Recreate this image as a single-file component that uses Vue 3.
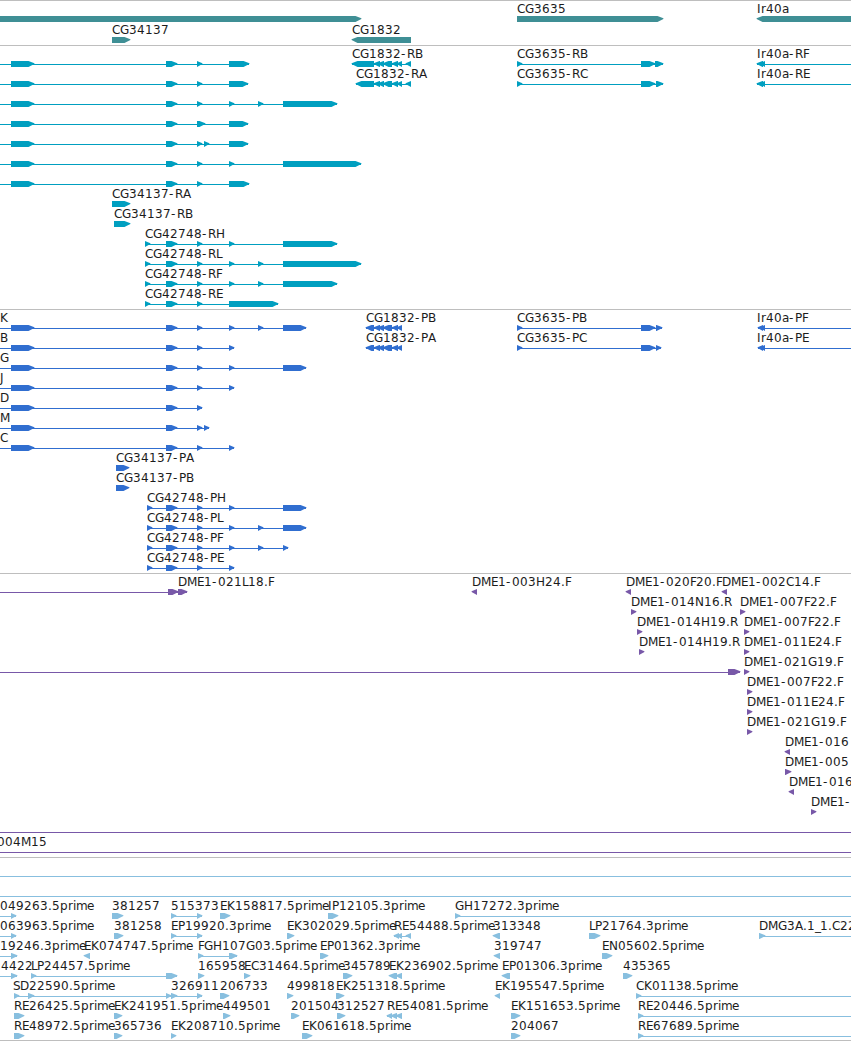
<template>
  <div class="browser">
    <section v-for="track in tracks" :key="track.name" class="track" :class="`track-${track.name}`">
      <svg class="track-canvas" :width="WIDTH" :height="track.height">
        <g v-for="(row, i) in track.rows" :key="i" :transform="`translate(0 ${15 + i * track.pitch})`">
          <g v-for="(item, j) in row" :key="j">
            <rect
              v-if="item.to > item.from"
              class="glyph"
              :x="item.from"
              y="3"
              :width="item.to - item.from"
              height="1"
            />
            <polygon
              v-for="(block, k) in item.blocks"
              :key="k"
              class="glyph"
              :points="arrow(block, item.reverse)"
            />
            <text v-if="item.label" class="label" :x="letterPositions(item)" y="-3">{{ item.label }}</text>
          </g>
        </g>
      </svg>
    </section>
  </div>
</template>

<script setup>
const WIDTH = 851;

// label, label x, exon blocks, line range
const fwd = (label, x, blocks = [], from = 0, to = 0) => ({ label, x, blocks, from, to });
const rev = (label, x, blocks = [], from = 0, to = 0) => ({
  ...fwd(label, x, blocks, from, to),
  reverse: true,
});
const line = (label = "", x = 0) => fwd(label, x, [], 0, WIDTH);

// exons shared by the CG42748 isoforms
const A = [11, 34];
const B = [166, 177];
const C = [197, 202];
const D = [229, 234];
const E = [258, 263];

const isoform = (label, ...blocks) => fwd(label, 0, [A, B, ...blocks], 0, blocks.at(-1)[1]);
const shortForm = (label, x, ...blocks) => fwd(label, x, [[x, x + 5], B, ...blocks], x, blocks.at(-1)[1]);

const minusExons = [[374, 380], [378, 384], [383, 392], [392, 398], [397, 402]];

const tracks = [
  {
    name: "gene",
    height: 44,
    pitch: 21,
    rows: [
      [
        fwd("", 0, [[-10, 361]]),
        fwd("CG3635", 517, [[517, 663]]),
        rev("Ir40a", 757, [[757, 870]]),
      ],
      [fwd("CG34137", 112, [[112, 130]]), rev("CG1832", 352, [[352, 411]])],
    ],
  },
  {
    name: "transcript",
    height: 263,
    pitch: 20,
    rows: [
      [
        isoform("", C, [229, 249]),
        rev("CG1832-RB", 352, [[352, 374], ...minusExons, [406, 411]], 352, 411),
        fwd("CG3635-RB", 517, [[517, 522], [641, 655], [655, 663]], 517, 663),
        rev("Ir40a-RF", 757, [[757, 763], [760, 765]], 757, WIDTH),
      ],
      [
        isoform("", C, [229, 248]),
        rev("CG1832-RA", 356, [[356, 374], ...minusExons, [406, 411]], 356, 411),
        fwd("CG3635-RC", 517, [[517, 522], [641, 655], [656, 663]], 517, 663),
        rev("Ir40a-RE", 757, [[757, 763], [760, 765]], 757, WIDTH),
      ],
      [isoform("", C, D, E, [283, 337])],
      [isoform("", [197, 205], [229, 248])],
      [isoform("", C, [204, 209], [229, 248])],
      [isoform("", C, D, [283, 361])],
      [isoform("", C, [229, 249])],
      [fwd("CG34137-RA", 112, [[112, 130]])],
      [fwd("CG34137-RB", 114, [[114, 130]])],
      [shortForm("CG42748-RH", 145, C, D, [283, 337])],
      [shortForm("CG42748-RL", 145, C, D, E, [283, 361])],
      [shortForm("CG42748-RF", 145, C, D, E, [283, 337])],
      [shortForm("CG42748-RE", 145, C, [229, 278])],
    ],
  },
  {
    name: "protein",
    height: 263,
    pitch: 20,
    rows: [
      [
        isoform("K", C, D, E, [283, 306]),
        rev("CG1832-PB", 366, [[366, 374], ...minusExons], 366, 402),
        fwd("CG3635-PB", 517, [[517, 522], [641, 655], [656, 662]], 517, 662),
        rev("Ir40a-PF", 757, [[758, 763], [760, 765]], 758, WIDTH),
      ],
      [
        isoform("B", C, D),
        rev("CG1832-PA", 366, [[366, 374], ...minusExons], 366, 402),
        fwd("CG3635-PC", 517, [[517, 522], [641, 655], [656, 661]], 517, 661),
        rev("Ir40a-PE", 757, [[758, 763], [760, 765]], 758, WIDTH),
      ],
      [isoform("G", C, D, [283, 306])],
      [isoform("J", C, D)],
      [isoform("D", C)],
      [isoform("M", C, [204, 209])],
      [isoform("C", C, D)],
      [fwd("CG34137-PA", 116, [[116, 129]])],
      [fwd("CG34137-PB", 116, [[116, 129]])],
      [shortForm("CG42748-PH", 147, C, D, [283, 306])],
      [shortForm("CG42748-PL", 147, C, D, E, [283, 306])],
      [shortForm("CG42748-PF", 147, C, D, E, [283, 288])],
      [shortForm("CG42748-PE", 147, C, D)],
    ],
  },
  {
    name: "bac",
    height: 283,
    pitch: 20,
    rows: [
      [
        fwd("DME1-021L18.F", 178, [[168, 178], [178, 187]], 0, 187),
        rev("DME1-003H24.F", 472, [[472, 477]]),
        rev("DME1-020F20.F", 626, [[626, 631]]),
        rev("DME1-002C14.F", 722, [[722, 727]]),
      ],
      [fwd("DME1-014N16.R", 631, [[631, 636]]), fwd("DME1-007F22.F", 740, [[740, 745]])],
      [fwd("DME1-014H19.R", 637, [[637, 642]]), fwd("DME1-007F22.F", 744, [[744, 749]])],
      [fwd("DME1-014H19.R", 639, [[639, 644]]), fwd("DME1-011E24.F", 744, [[744, 749]])],
      [fwd("", 0, [[728, 740]], 0, 740), fwd("DME1-021G19.F", 744, [[744, 749]])],
      [fwd("DME1-007F22.F", 747, [[747, 752]])],
      [fwd("DME1-011E24.F", 747, [[747, 752]])],
      [fwd("DME1-021G19.F", 747, [[747, 752]])],
      [rev("DME1-016", 785, [[785, 790]])],
      [fwd("DME1-005", 785, [[785, 791]])],
      [rev("DME1-016", 789, [[789, 794]])],
      [fwd("DME1-", 811, [[811, 816]])],
      [line()],
      [line("004M15", -3)],
    ],
  },
  {
    name: "est",
    height: 182,
    pitch: 20,
    rows: [
      [line()],
      [line()],
      [
        fwd("049263.5prime", 0, [[11, 16]], 0, 16),
        fwd("381257", 112, [[112, 123]]),
        fwd("515373", 171, [[171, 176], C], 171, 202),
        fwd("EK158817.5prime", 220, [[220, 230]]),
        fwd("IP12105.3prime", 328, [[328, 338]]),
        fwd("GH17272.3prime", 455, [[455, 460]], 455, WIDTH),
      ],
      [
        fwd("063963.5prime", 0, [[11, 16]], 0, 16),
        fwd("381258", 114, [[114, 123]]),
        fwd("EP19920.3prime", 171, [[171, 176], C], 171, 202),
        fwd("EK302029.5prime", 287, [[287, 294]]),
        rev("RE54488.5prime", 394, [[394, 399], [397, 402], [406, 411]], 394, 411),
        rev("313348", 493, [[493, 500]]),
        fwd("LP21764.3prime", 589, [[589, 600]]),
        fwd("DMG3A.1_1.C22", 759, [[759, 765]], 759, WIDTH),
      ],
      [
        fwd("19246.3prime", 0, [[11, 17]], 0, 17),
        rev("EK074747.5prime", 84, [[84, 90]]),
        fwd("FGH107G03.5prime", 198, [[198, 203], [229, 237]], 198, 237),
        fwd("EP01362.3prime", 320, [[320, 328]]),
        rev("319747", 494, [[494, 500]]),
        fwd("EN05602.5prime", 602, [[602, 612]]),
      ],
      [
        fwd("4422", 1, [[11, 17]], 0, 17),
        fwd("LP24457.5prime", 31, [[31, 36], B], 31, 177),
        fwd("165958", 198, [[198, 204]]),
        fwd("EC31464.5prime", 244, [[244, 250]]),
        fwd("345789", 343, [[343, 352]]),
        rev("EK236902.5prime", 389, [[389, 397], [396, 402]]),
        rev("EP01306.3prime", 502, [[502, 510]]),
        fwd("435365", 623, [[623, 632]]),
      ],
      [
        fwd("SD22590.5prime", 13, [[14, 19], [28, 34], [166, 171]], 14, 171),
        fwd("326911", 171, [[171, 177], C], 171, 202),
        fwd("206733", 220, [[220, 229]]),
        fwd("499818", 287, [[287, 293]]),
        fwd("EK251318.5prime", 336, [[336, 344]]),
        rev("EK195547.5prime", 495, [[495, 500]]),
        fwd("CK01138.5prime", 636, [[636, 641]], 636, WIDTH),
      ],
      [
        fwd("RE26425.5prime", 14, [[14, 24]]),
        fwd("EK241951.5prime", 114, [[114, 122]]),
        fwd("449501", 223, [[223, 230]]),
        fwd("201504", 291, [[291, 299]]),
        fwd("312527", 337, [[337, 345]]),
        rev("RE54081.5prime", 387, [[387, 392], [391, 397], [396, 402]], 387, 402),
        fwd("EK151653.5prime", 511, [[511, 520]]),
        fwd("RE20446.5prime", 638, [[638, 643]], 638, WIDTH),
      ],
      [
        fwd("RE48972.5prime", 14, [[14, 24]]),
        fwd("365736", 114, [[114, 122]]),
        fwd("EK208710.5prime", 171, [[171, 176]]),
        fwd("EK061618.5prime", 302, [[302, 312]]),
        fwd("204067", 511, [[511, 520]]),
        fwd("RE67689.5prime", 638, [[638, 643]], 638, WIDTH),
      ],
    ],
  },
];

// whole-pixel letter advances, digits are 8
const advances = {
  A: 8, C: 8, D: 9, E: 7, F: 6, G: 9, H: 9, I: 4, K: 8, L: 6, M: 10, N: 9, P: 7, R: 8, S: 7,
  a: 7, e: 7, i: 3, m: 11, p: 8, r: 5, "-": 6, ".": 4, _: 5,
};

const letterPositions = ({ label, x }) => {
  let pos = x;
  return [...label]
    .map((char) => {
      const current = pos;
      pos += advances[char] || 8;
      return current;
    })
    .join(" ");
};

// the tip sits slightly past the feature end
const arrow = ([start, end], reverse) => {
  const head = Math.min(5.5, end - start);
  if (reverse) {
    const neck = start + head;
    return `${end},0 ${neck},0 ${start - 0.4},2.2 ${start - 0.4},3 ${neck},6 ${end},6`;
  }
  const neck = end - head;
  return `${start},0 ${neck},0 ${end + 0.4},2.2 ${end + 0.4},3 ${neck},6 ${start},6`;
};
</script>

<style>
body {
  margin: 0;
  background: #fff;
}
</style>

<style scoped>
.browser {
  width: 851px;
  height: 1041px;
  overflow: hidden;
  background: #fff;
  border-bottom: 1px solid #bebebe;
  box-sizing: border-box;
}

.track {
  border-top: 1px solid #bebebe;
}

.track-canvas {
  display: block;
  overflow: hidden;
}

.label {
  font-family: "DejaVu Sans", "Liberation Sans", sans-serif;
  font-size: 12px;
  fill: #1c1c1c;
}

.track-gene .glyph {
  fill: #3f8f95;
}

.track-transcript .glyph {
  fill: #009fc0;
}

.track-protein .glyph {
  fill: #306ed0;
}

.track-bac .glyph {
  fill: #7858a8;
}

.track-est .glyph {
  fill: #88bfdf;
}
</style>
